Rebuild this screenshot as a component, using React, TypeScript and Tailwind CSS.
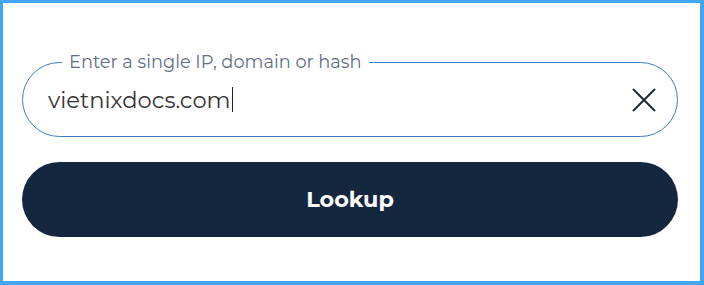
import React from "react";

export default function App() {
  return (
    <div className="w-[704px] h-[285px] box-border border-t-[3px] border-l-[3px] border-r-[4px] border-b-[4px] border-[#42a5f5] bg-white pl-[19px] pr-[22px] pt-[59px] font-['Montserrat','Open_Sans',sans-serif]">
      <div className="relative h-[75px] rounded-full border border-[#3b7cc4] flex items-center pl-[25px] pr-[21px]">
        <span className="absolute -top-[12px] left-[39px] px-[7px] bg-white text-[17.8px] leading-[22px] text-[#5f6f86]">
          Enter a single IP, domain or hash
        </span>
        <div className="flex-1 flex items-center text-[22.6px] text-[#333333] leading-[28px]">
          <span>vietnixdocs.com</span>
          <span className="inline-block w-[1px] h-[25px] bg-[#222] ml-[1px]"></span>
        </div>
        <svg width="24" height="24" viewBox="0 0 24 24" className="shrink-0">
          <path d="M1 1 L23 23 M23 1 L1 23" stroke="#1e293b" strokeWidth="2" fill="none" />
        </svg>
      </div>
      <button className="mt-[25px] w-full h-[75px] rounded-full bg-[#15273f] text-white text-[22.3px] font-bold flex items-center justify-center">
        Lookup
      </button>
    </div>
  );
}
